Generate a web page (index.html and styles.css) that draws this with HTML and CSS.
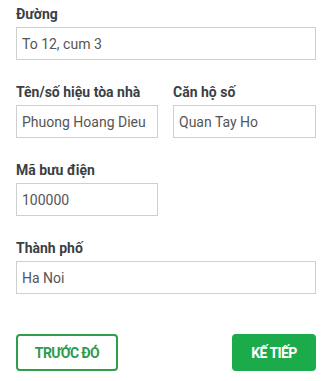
FILE: index.html
```html
<!DOCTYPE html>
<html lang="vi">
<head>
<meta charset="utf-8">
<link rel="stylesheet" href="styles.css">
</head>
<body>
<form class="form">
  <div class="field">
    <label class="label">Đường</label>
    <input class="input" type="text" value="To 12, cum 3">
  </div>
  <div class="row">
    <div class="field">
      <label class="label">Tên/số hiệu tòa nhà</label>
      <input class="input" type="text" value="Phuong Hoang Dieu">
    </div>
    <div class="field">
      <label class="label">Căn hộ số</label>
      <input class="input" type="text" value="Quan Tay Ho">
    </div>
  </div>
  <div class="row">
    <div class="field">
      <label class="label">Mã bưu điện</label>
      <input class="input" type="text" value="100000">
    </div>
  </div>
  <div class="field">
    <label class="label">Thành phố</label>
    <input class="input" type="text" value="Ha Noi">
  </div>
  <div class="actions">
    <button type="button" class="btn btn-outline">TRƯỚC ĐÓ</button>
    <button type="button" class="btn btn-primary">KẾ TIẾP</button>
  </div>
</form>
</body>
</html>
```
FILE: styles.css
```css
html, body {
  margin: 0;
  padding: 0;
  background: #ffffff;
}
body {
  font-family: Roboto, "Liberation Sans", Arial, sans-serif;
}
.form {
  display: flex;
  flex-direction: column;
  gap: 24px;
  padding: 6px 16px 0 16px;
  width: 300px;
}
.row {
  display: grid;
  grid-template-columns: 142px 143px;
  column-gap: 15px;
}
.field {
  display: flex;
  flex-direction: column;
  gap: 4px;
}
.label {
  font-size: 14px;
  line-height: 17px;
  font-weight: 700;
  color: #3b3f44;
}
.input {
  box-sizing: border-box;
  height: 33px;
  width: 100%;
  margin: 0;
  border: 1px solid #cfcfcf;
  border-radius: 0;
  padding: 0 5px;
  font-family: Roboto, "Liberation Sans", Arial, sans-serif;
  font-size: 14px;
  color: #555555;
  background: #fff;
  outline: none;
}
.actions {
  display: flex;
  justify-content: space-between;
  margin-top: 16px;
}
.btn {
  box-sizing: border-box;
  height: 37px;
  padding: 0;
  border-radius: 4px;
  font-family: Roboto, "Liberation Sans", Arial, sans-serif;
  font-size: 14px;
  font-weight: 700;
  letter-spacing: -0.6px;
  cursor: pointer;
}
.btn-outline {
  width: 102px;
  background: #fff;
  color: #2e9b4c;
  border: 2px solid #2e9e4a;
}
.btn-primary {
  width: 84px;
  background: #1bab4b;
  color: #fff;
  border: 2px solid #1bab4b;
}
```
